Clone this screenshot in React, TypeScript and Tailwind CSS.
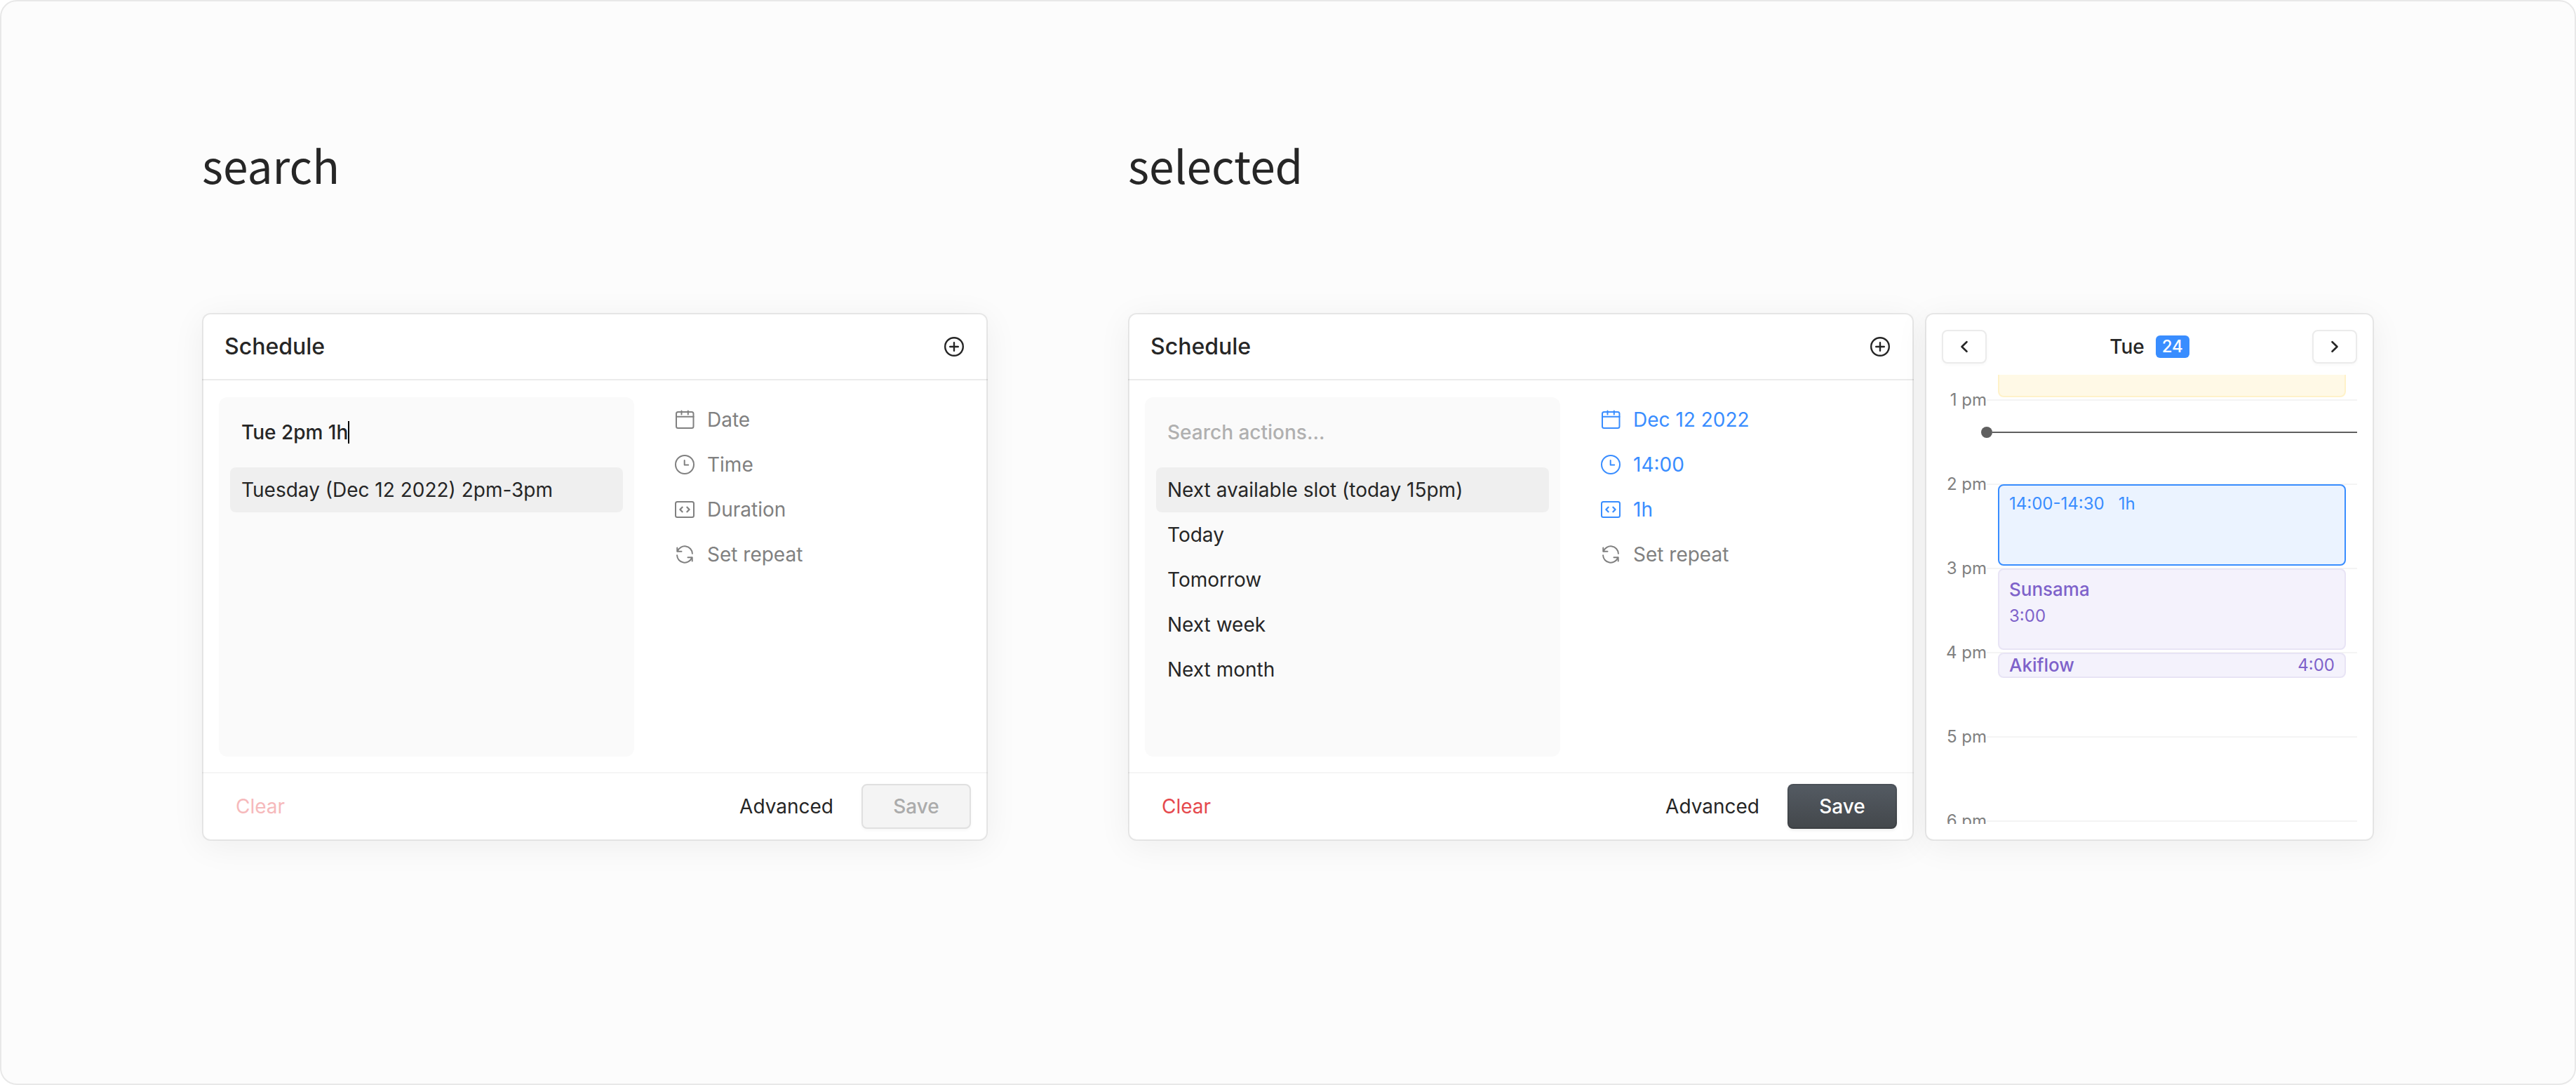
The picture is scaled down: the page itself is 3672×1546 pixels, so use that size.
import React from "react";

type IconProps = { className?: string };

const stroke = {
  fill: "none",
  stroke: "currentColor",
  strokeWidth: 2,
  strokeLinecap: "round" as const,
  strokeLinejoin: "round" as const,
  "aria-hidden": true,
};

function CalendarIcon({ className }: IconProps) {
  return (
    <svg viewBox="0 0 32 32" className={className} {...stroke}>
      <rect x="4" y="5" width="24.500" height="23" rx="2.5" />
      <path d="M4 11.800h24.500M11.500 3.500v5M20.800 3.500v5" />
    </svg>
  );
}

function ClockIcon({ className }: IconProps) {
  return (
    <svg viewBox="0 0 32 32" className={className} {...stroke}>
      <circle cx="16" cy="16" r="13" />
      <path d="M15.700 10v6.400h5.500" />
    </svg>
  );
}

function DurationIcon({ className }: IconProps) {
  return (
    <svg viewBox="0 0 32 32" className={className} {...stroke}>
      <rect x="3" y="5" width="26" height="22" rx="2.5" />
      <path strokeWidth="2.300" d="M12.600 12.800L9.400 16l3.200 3.200M19.400 12.800L22.600 16l-3.200 3.200" />
    </svg>
  );
}

function RepeatIcon({ className }: IconProps) {
  return (
    <svg viewBox="0 0 32 32" className={className} {...stroke}>
      <path d="M5.800 11.400A10.900 10.900 0 0 1 26.900 14.800M26.200 20.600A10.900 10.900 0 0 1 5.100 17.200" />
      <path d="M5.300 6.500v5.200h6.200M26.700 25.500v-5.200h-6.200" />
    </svg>
  );
}

function PlusCircleIcon({ className }: IconProps) {
  return (
    <svg viewBox="0 0 32 32" className={className} {...stroke} strokeWidth={2.4}>
      <circle cx="16" cy="16" r="12.8" />
      <path d="M16 10.200v11.600M10.200 16h11.600" />
    </svg>
  );
}

function ChevronIcon({ flip }: { flip?: boolean }) {
  return (
    <svg viewBox="0 0 32 32" className="size-8" {...stroke} strokeWidth={2.6}>
      <path d={flip ? "M12.500 9.200l7 6.800-7 6.800" : "M19.500 9.200l-7 6.800 7 6.800"} />
    </svg>
  );
}

const panel =
  "rounded-xl border-2 border-black/8 bg-white bg-clip-padding shadow-[0_8px_48px_rgba(0,0,0,0.06)]";

type Field = { label: string; icon: React.ReactNode; set?: boolean };

type ScheduleCardProps = {
  query: string;
  caret?: boolean;
  options: string[];
  fields: Field[];
  ready?: boolean;
};

function ScheduleCard({ query, caret, options, fields, ready }: ScheduleCardProps) {
  return (
    <section className={`${panel} min-w-0 flex-1`}>
      <header className="-mx-0.5 flex h-[94px] items-center justify-between border-b-2 border-black/8 px-8">
        <h3 className="text-[32px] leading-10 font-medium">Schedule</h3>
        <button type="button" aria-label="Add" className="size-8">
          <PlusCircleIcon className="size-8" />
        </button>
      </header>

      <div className="flex gap-14 px-[22px] pt-6 pb-[22px]">
        <div className="h-[512px] w-[592px] rounded-xl bg-[#fafafa] p-4">
          <div className="mb-4 flex h-[68px] items-center px-4">
            <input
              type="text"
              aria-label="Search actions"
              defaultValue={query}
              placeholder="Search actions..."
              className={`field-sizing-content max-w-full bg-transparent leading-8 outline-none placeholder:text-[#b0b0b0] ${
                caret ? "font-medium" : "placeholder:font-medium"
              }`}
            />
            {caret && <span className="h-8 w-0.5 bg-black" />}
          </div>
          <ul>
            {options.map((option, i) => (
              <li key={option}>
                <button
                  type="button"
                  className={`h-16 w-full rounded-lg px-4 text-left ${i === 0 ? "bg-[#efefef]" : ""}`}
                >
                  {option}
                </button>
              </li>
            ))}
          </ul>
        </div>

        <ul>
          {fields.map((field) => (
            <li key={field.label}>
              <button
                type="button"
                className={`flex h-16 items-center gap-4 ${field.set ? "text-[#398dff]" : "text-[#808080]"}`}
              >
                {field.icon}
                {field.label}
              </button>
            </li>
          ))}
        </ul>
      </div>

      <footer className="-mx-0.5 flex h-24 items-center border-t-2 border-black/4 pr-6 pl-8">
        <button type="button" disabled={!ready} className={`px-4 ${ready ? "text-[#e5484d]" : "text-[#f6b9bb]"}`}>
          Clear
        </button>
        <button type="button" className="ml-auto px-6">
          Advanced
        </button>
        <button
          type="button"
          disabled={!ready}
          className={`ml-4 h-16 w-[156px] rounded-lg border-2 font-medium ${
            ready
              ? "border-black/10 bg-linear-to-b from-[#545b63] to-[#43474b] bg-origin-border text-white shadow-[0_2px_4px_rgba(0,0,0,0.08)]"
              : "border-[#e0e0e0] bg-[#f4f4f4] text-[#ababab] shadow-[0_2px_4px_rgba(0,0,0,0.04)]"
          }`}
        >
          Save
        </button>
      </footer>
    </section>
  );
}

const HOUR = 120;
const FIRST_HOUR = 13;
const TOP = 36;
const offset = (hour: number) => TOP + (hour - FIRST_HOUR) * HOUR;

const hours = ["1 pm", "2 pm", "3 pm", "4 pm", "5 pm", "6 pm"];

type EventProps = { start: number; minutes: number; className: string; children?: React.ReactNode };

function CalendarEvent({ start, minutes, className, children }: EventProps) {
  return (
    <div
      className={`absolute right-4 left-20 rounded-lg border-2 px-3.5 ${className}`}
      style={{ top: offset(start), height: (minutes / 60) * HOUR - 4 }}
    >
      {children}
    </div>
  );
}

function DayCalendar() {
  const arrow =
    "flex h-12 w-16 items-center justify-center rounded-lg border-2 border-[#ebebeb] bg-white shadow-[0_2px_4px_rgba(0,0,0,0.03)]";
  return (
    <section className={`${panel} w-[640px] shrink-0 px-[22px] pt-[22px] pb-[22px]`}>
      <header className="mb-4 flex items-center justify-between">
        <button type="button" aria-label="Previous day" className={arrow}>
          <ChevronIcon />
        </button>
        <h3 className="flex items-center gap-4 font-medium">
          Tue
          <span className="flex h-8 w-12 items-center justify-center rounded-md bg-[#398dff] text-2xl text-white">
            24
          </span>
        </h3>
        <button type="button" aria-label="Next day" className={arrow}>
          <ChevronIcon flip />
        </button>
      </header>

      <div className="relative h-[640px] overflow-hidden text-2xl leading-8">
        <ul className="pt-5">
          {hours.map((hour) => (
            <li key={hour} className="h-[120px]">
              <div className="flex items-center text-[#808080]">
                <span className="w-16 text-right whitespace-nowrap">{hour}</span>
                <span className="h-0.5 flex-1 bg-[#f4f4f4]" />
              </div>
            </li>
          ))}
        </ul>

        <CalendarEvent start={12} minutes={60} className="border-[#fff2c9] bg-[#fff9e6]" />
        <CalendarEvent start={14} minutes={60} className="border-[#398dff] bg-[#ebf3ff] pt-2.5 text-[#398dff]">
          <p className="flex gap-5">
            <span>14:00-14:30</span>
            <span>1h</span>
          </p>
        </CalendarEvent>
        <CalendarEvent start={15} minutes={60} className="border-[#e8e4f5] bg-[#f4f2fc] pt-2.5 text-[#7e62ca]">
          <p className="text-[26px] leading-9 font-medium">Sunsama</p>
          <p className="leading-10">3:00</p>
        </CalendarEvent>
        <CalendarEvent
          start={16}
          minutes={20}
          className="flex items-center justify-between border-[#e8e4f5] bg-[#f4f2fc] text-[#7e62ca]"
        >
          <p className="text-[26px] leading-8 font-medium">Akiflow</p>
          <p>4:00</p>
        </CalendarEvent>

        <div
          className="absolute right-0 left-14 flex -translate-y-1/2 items-center"
          style={{ top: Math.round(offset(13 + 23 / 60)) }}
        >
          <span className="size-4 rounded-full bg-[#5f5f5f]" />
          <span className="h-0.5 flex-1 bg-[#5f5f5f]" />
        </div>
      </div>
    </section>
  );
}

const icon = "size-8";
const emptyFields: Field[] = [
  { label: "Date", icon: <CalendarIcon className={icon} /> },
  { label: "Time", icon: <ClockIcon className={icon} /> },
  { label: "Duration", icon: <DurationIcon className={icon} /> },
  { label: "Set repeat", icon: <RepeatIcon className={icon} /> },
];
const filledFields: Field[] = [
  { label: "Dec 12 2022", icon: <CalendarIcon className={icon} />, set: true },
  { label: "14:00", icon: <ClockIcon className={icon} />, set: true },
  { label: "1h", icon: <DurationIcon className={icon} />, set: true },
  { label: "Set repeat", icon: <RepeatIcon className={icon} /> },
];

const title = "mb-40 font-['Noto_Sans_CJK_SC',sans-serif] text-[64px] leading-[104px]";

export default function App() {
  return (
    <div className="bg-white">
      <main className="min-h-screen rounded-3xl border-2 border-[#e8e8e8] bg-[#fcfcfc] px-[286px] pt-[180px] pb-40 font-[Inter,sans-serif] text-[28px] leading-8 text-[#262626]">
        <div className="flex gap-[200px]">
          <div className="min-w-0 flex-1">
            <h2 className={title}>search</h2>
            <div className="flex">
              <ScheduleCard
                query="Tue 2pm 1h"
                caret
                options={["Tuesday (Dec 12 2022) 2pm-3pm"]}
                fields={emptyFields}
              />
            </div>
          </div>
          <div className="min-w-0 grow basis-[656px]">
            <h2 className={title}>selected</h2>
            <div className="flex gap-4">
              <ScheduleCard
                query=""
                options={["Next available slot (today 15pm)", "Today", "Tomorrow", "Next week", "Next month"]}
                fields={filledFields}
                ready
              />
              <DayCalendar />
            </div>
          </div>
        </div>
      </main>
    </div>
  );
}
